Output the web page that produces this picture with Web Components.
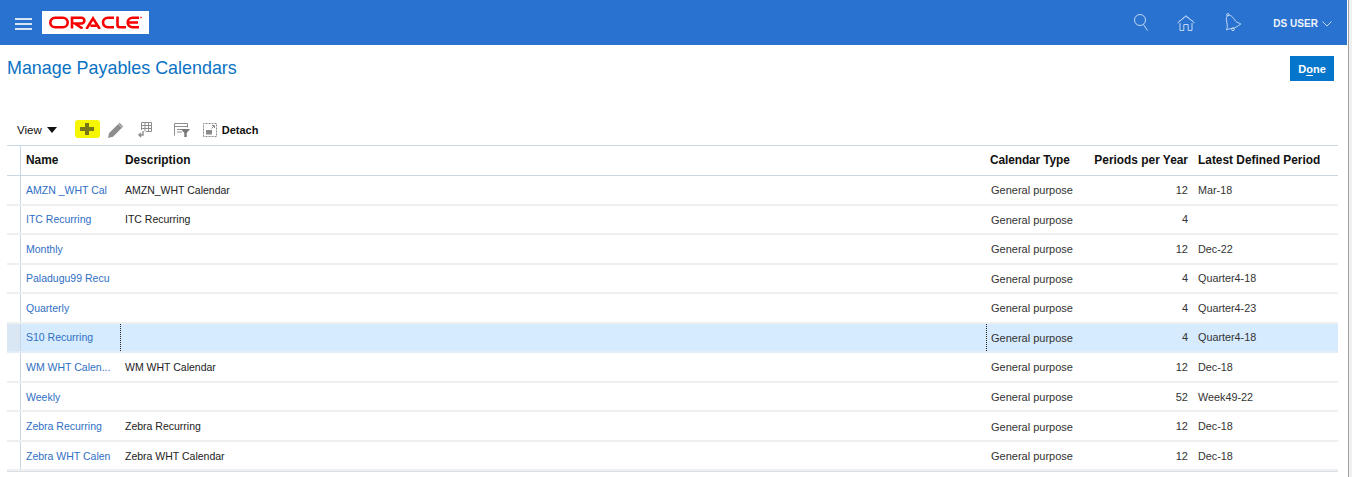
<!DOCTYPE html>
<html>
<head>
<meta charset="utf-8">
<style>
    html, body { margin: 0; padding: 0; background: #fff; }
    body { font-family: "Liberation Sans", Arial, sans-serif; width: 1352px; height: 477px; overflow: hidden; }
</style>
</head>
<body>
<app-shell>
    <app-header user="DS USER"></app-header>
    <page-title heading="Manage Payables Calendars"></page-title>
    <table-toolbar></table-toolbar>
    <calendar-table>
        <calendar-row name="AMZN _WHT Cal" description="AMZN_WHT Calendar" periods="12" latest="Mar-18"></calendar-row>
        <calendar-row name="ITC Recurring" description="ITC Recurring" periods="4" latest=""></calendar-row>
        <calendar-row name="Monthly" description="" periods="12" latest="Dec-22"></calendar-row>
        <calendar-row name="Paladugu99 Recu" description="" periods="4" latest="Quarter4-18"></calendar-row>
        <calendar-row name="Quarterly" description="" periods="4" latest="Quarter4-23"></calendar-row>
        <calendar-row selected name="S10 Recurring" description="" periods="4" latest="Quarter4-18"></calendar-row>
        <calendar-row name="WM WHT Calen..." description="WM WHT Calendar" periods="12" latest="Dec-18"></calendar-row>
        <calendar-row name="Weekly" description="" periods="52" latest="Week49-22"></calendar-row>
        <calendar-row name="Zebra Recurring" description="Zebra Recurring" periods="12" latest="Dec-18"></calendar-row>
        <calendar-row name="Zebra WHT Calen" description="Zebra WHT Calendar" periods="12" latest="Dec-18"></calendar-row>
    </calendar-table>
</app-shell>
<script>
class AppShell extends HTMLElement {
    connectedCallback() {
        const shadow = this.attachShadow({ mode: "open" })
        shadow.innerHTML = `
            <style>
                :host { display: block; position: relative; width: 1352px; height: 477px; overflow: hidden; }
                .edge { position: absolute; top: 0; right: 0; bottom: 0; width: 4px; background: #f0f0f0; border-left: 1px solid #a0a0a0; box-sizing: border-box; }
            </style>
            <slot></slot>
            <div class="edge"></div>
        `
    }
}

class AppHeader extends HTMLElement {
    connectedCallback() {
        const shadow = this.attachShadow({ mode: "open" })
        shadow.innerHTML = `
            <style>
                :host { display: flex; align-items: center; height: 45px; margin-right: 5px; background: #2a72d0; color: #fff; padding: 0 15px 0 15px; box-sizing: border-box; }
                .menu { width: 17px; height: 12px; display: flex; flex-direction: column; justify-content: space-between; margin-top: 3px; }
                .menu i { display: block; height: 2px; background: #d6e4f6; }
                .logo { width: 107px; height: 23px; margin-left: 10px; background: #fff; display: flex; align-items: center; justify-content: center; }
                .spacer { flex: 1; }
                svg.ic { fill: none; stroke: #c3d8f3; stroke-width: 1; display: block; }
                .user { font: bold 10px "Liberation Sans", Arial, sans-serif; letter-spacing: .03px; color: #eef4fc; margin-left: 31px; margin-top: 1px; }
                .caret { margin-left: 4px; margin-top: 2px; }
            </style>
            <div class="menu"><i></i><i></i><i></i></div>
            <div class="logo">
                <svg width="93" height="13" viewBox="0 0 93 13" fill="none" stroke="#f80000" stroke-width="2.600">
                    <rect x="1.300" y="1.700" width="17.400" height="9.600" rx="4.800"/>
                    <path d="M23 12.500V1.700h9.500a2.800 2.800 0 0 1 0 5.800H26L33.500 12.500"/>
                    <path d="M37.500 13 44 2.400 50.800 13M41.500 9.800h6"/>
                    <path d="M65 1.700h-6.200a4.800 4.800 0 0 0 0 9.600H65"/>
                    <path d="M68.500 .5v8.500a2.300 2.300 0 0 0 2.300 2.300H77"/>
                    <path d="M90 1.700h-6.500a4.800 4.800 0 0 0 0 9.600H90M79.500 6.500h9.500"/>
                    <circle cx="92" cy="1.500" r=".6" stroke-width=".8"/>
                </svg>
            </div>
            <div class="spacer"></div>
            <svg class="ic" width="14" height="17" viewBox="0 0 14 17" style="margin-top:-1px"><circle cx="6" cy="6" r="5.500"/><path d="M9.500 10.500 13.500 16.500"/></svg>
            <svg class="ic" width="18" height="16" viewBox="0 0 18 16" style="margin-left:29px"><path d="M.5 8 9 .7 17.500 8"/><path d="M2 6.500 9 1.500l7 5" stroke-dasharray="1.500 .8"/><path d="M3 8v7.500h3.800V9.500h4.400v6H15V8"/></svg>
            <svg class="ic" width="17" height="19" viewBox="0 0 17 19" style="margin-left:30px"><path d="M3 2C7 2 9 6 10.500 8 12 9.500 14 10 15.800 11 13 13 10 15 7.500 15.500 5 15.500 3 16 1.500 17 3 14 2 10 1.500 8 1 6 1.500 3 3 2Z"/><circle cx="8" cy="16.200" r="1.400"/><circle cx="2.800" cy="1.700" r="1.200"/></svg>
            <span class="user">${this.getAttribute("user")}</span>
            <svg class="ic caret" width="10" height="6" viewBox="0 0 10 6"><path d="M.5.500 5 5 9.500.500"/></svg>
        `
    }
}

class PageTitle extends HTMLElement {
    connectedCallback() {
        const shadow = this.attachShadow({ mode: "open" })
        shadow.innerHTML = `
            <style>
                :host { display: flex; justify-content: space-between; height: 68px; padding: 11px 18px 0 7px; box-sizing: border-box; }
                h1 { margin: 0; font: normal 17.900px/24px "Liberation Sans", Arial, sans-serif; color: #0a72c4; }
                button { width: 44px; height: 25px; border: 0; padding: 0; background: #0576cc; color: #fff; font: bold 11px "Liberation Sans", Arial, sans-serif; }
                u { text-underline-offset: 2px; }
            </style>
            <h1>${this.getAttribute("heading")}</h1>
            <button>D<u>o</u>ne</button>
        `
    }
}

class TableToolbar extends HTMLElement {
    connectedCallback() {
        const shadow = this.attachShadow({ mode: "open" })
        shadow.innerHTML = `
            <style>
                :host { display: flex; align-items: center; height: 32px; padding: 2px 0 0 17px; box-sizing: border-box; font: 11.500px "Liberation Sans", Arial, sans-serif; color: #111; }
                .arrow { width: 0; height: 0; border: 5px solid transparent; border-top: 6px solid #111; border-bottom: 0; margin-left: 5px; }
                .add { width: 25px; height: 18px; background: #f6f600; border-radius: 3px; margin-left: 18px; margin-top: -3px; display: flex; align-items: center; justify-content: center; }
                svg { display: block; }
                b { font-size: 11px; margin-left: 5px; }
            </style>
            <span>View</span><span class="arrow"></span>
            <div class="add"><svg width="14" height="12" viewBox="0 0 14 12"><path d="M5 0h4v4h5v4H9v4H5V8H0V4h5z" fill="#77771a"/></svg></div>
            <svg style="margin-left:8px" width="16" height="16" viewBox="0 0 16 16"><path d="M0 16l1.200-5L11.500 .8l3.700 3.700L5 14.800z" fill="#8d8d8d"/><path d="M10.500 2l3.600 3.600" stroke="#fff" stroke-width=".7"/></svg>
            <svg style="margin-left:14px" width="14" height="16" viewBox="0 0 14 16" fill="none" stroke="#8d8d8d"><path d="M3.500 8V.5h10v9H8M3.500 3.500h10M7 .5v9M10.500 .5v9M3.500 6.500h10"/><path d="M5 9v4H1M3 11l-2 2 2 2" stroke-width="1.400"/></svg>
            <svg style="margin-left:22px" width="16" height="14" viewBox="0 0 16 14" fill="none" stroke="#8d8d8d"><path d="M.5 12.500V.5h13v4M.5 3.500h13M3 6.500h5M3 9h5"/><path d="M7 6h9l-3.300 4v4h-2.400v-4z" fill="#777" stroke="none"/></svg>
            <svg style="margin-left:13px" width="14" height="14" viewBox="0 0 14 14" fill="none" stroke="#8a8a8a"><path d="M.5 13.500V.5h13v13z" stroke-dasharray="2 1"/><rect x="3" y="7" width="6" height="4.500" fill="#8a8a8a" stroke="none"/><path d="M8.500 5.500l2.500-2.500M9 2.500h2.500V5"/></svg>
            <b>Detach</b>
        `
    }
}

const COLUMNS = "99px 866px 104px 103px 1fr"

class CalendarTable extends HTMLElement {
    connectedCallback() {
        const shadow = this.attachShadow({ mode: "open" })
        shadow.innerHTML = `
            <style>
                :host { display: block; margin: 0 14px 0 7px; border-top: 1px solid #c9d6e4; border-bottom: 2px solid #dcdfe3; height: 327px; box-sizing: border-box; }
                .head { display: grid; grid-template-columns: 14px ${COLUMNS}; height: 29px; border-bottom: 1px solid #c9d6e4; font: bold 11.900px/29px "Liberation Sans", Arial, sans-serif; color: #111; }
                .head div { padding-left: 5px; overflow: hidden; white-space: nowrap; }
                .head .gut { border-right: 1px solid #c9d6e4; padding: 0; }
                .head .t { padding-left: 4px; letter-spacing: -.1px; }
                .head .r { padding: 0 5px 0 0; text-align: right; }
            </style>
            <div class="head">
                <div class="gut"></div>
                <div>Name</div><div>Description</div><div class="t">Calendar Type</div><div class="r">Periods per Year</div><div>Latest Defined Period</div>
            </div>
            <slot></slot>
        `
    }
}

class CalendarRow extends HTMLElement {
    connectedCallback() {
        const shadow = this.attachShadow({ mode: "open" })
        const get = (n) => this.getAttribute(n) || ""
        shadow.innerHTML = `
            <style>
                :host { display: grid; grid-template-columns: 14px ${COLUMNS}; height: 29.560px; box-sizing: border-box; border-bottom: 2px solid #eeeff1; font: 10.500px/27px "Liberation Sans", Arial, sans-serif; color: #333; }
                :host([selected]) { background: #d6ebfe; border-bottom-color: #e4edf5; }
                div { padding: .72px 0 0 5px; white-space: nowrap; overflow: hidden; }
                .gut { border-right: 1px solid #c9d6e4; padding: 0; }
                :host([selected]) .gut { background: #d9e6f3; }
                .name { color: #2f6fc4; }
                .desc { color: #222; }
                .type { font-size: 11px; padding-top: 1.200px; }
                .per { padding-right: 5px; padding-left: 0; text-align: right; font-size: 11px; }
                .last { font-size: 10.800px; }
                :host([selected]) .dot { border-left: 1px dotted #222; padding-left: 4px; }
            </style>
            <div class="gut"></div>
            <div class="name">${get("name")}</div>
            <div class="desc dot">${get("description")}</div>
            <div class="type dot">General purpose</div>
            <div class="per">${get("periods")}</div>
            <div class="last">${get("latest")}</div>
        `
    }
}

customElements.define("app-shell", AppShell)
customElements.define("app-header", AppHeader)
customElements.define("page-title", PageTitle)
customElements.define("table-toolbar", TableToolbar)
customElements.define("calendar-table", CalendarTable)
customElements.define("calendar-row", CalendarRow)
</script>
</body>
</html>
